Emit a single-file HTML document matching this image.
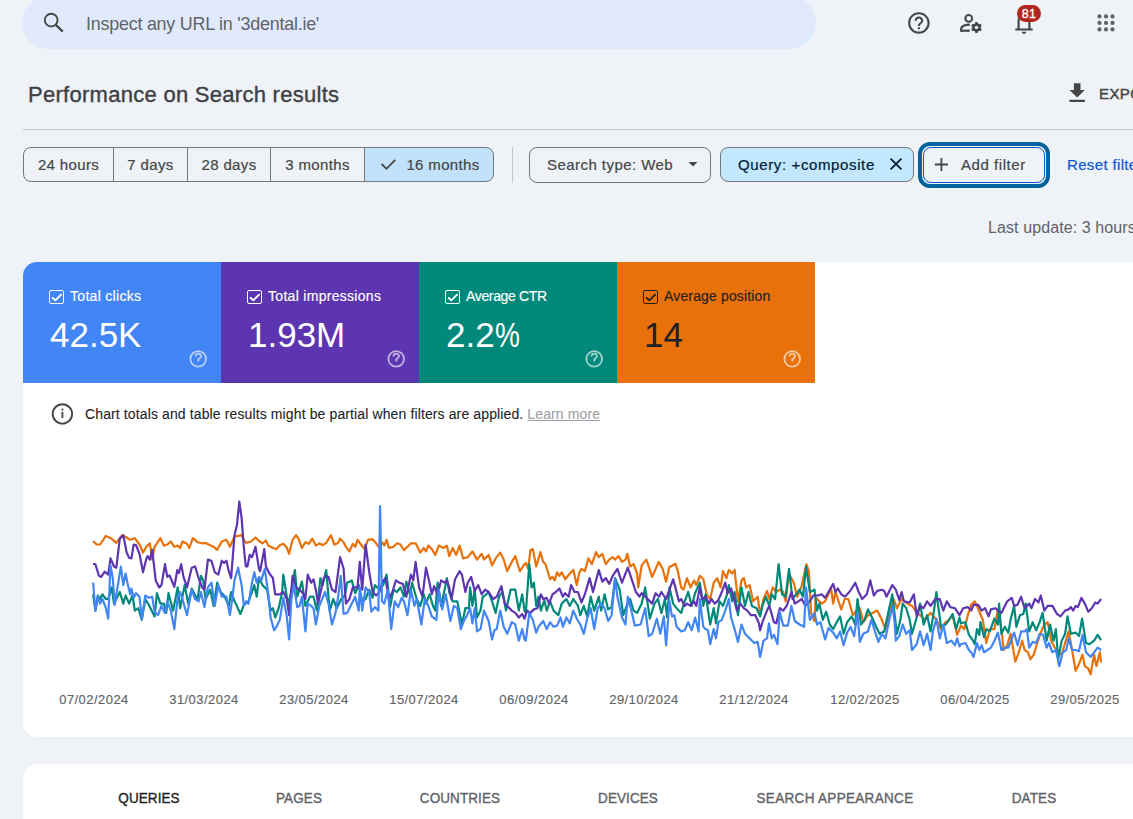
<!DOCTYPE html>
<html><head><meta charset="utf-8">
<style>
*{margin:0;padding:0;box-sizing:border-box}
html,body{width:1133px;height:819px;overflow:hidden;background:#eff2f7;font-family:"Liberation Sans",sans-serif;color:#1f1f1f;position:relative}
.abs{position:absolute;white-space:nowrap}
svg{position:absolute;overflow:visible}
#search{left:22px;top:-4px;width:794px;height:53px;border-radius:26.5px;background:#e1eafc}
#search-ph{left:86px;top:13.6px;font-size:17.9px;letter-spacing:-0.22px;color:#5f6368}
#title{left:28px;top:82px;font-size:22px;letter-spacing:0.28px;color:#3c4043;-webkit-text-stroke:0.35px currentColor}
#rule{left:23px;top:129px;width:1110px;height:1px;background:#c4c7c5}
.seg{position:absolute;top:147px;height:35px;border:1px solid #747775;font-size:15px;letter-spacing:0.35px;color:#444746;padding-top:8px;text-align:center;-webkit-text-stroke:0.2px currentColor}
#sep{left:512px;top:147px;width:1px;height:36px;background:#c4c7c5}
.chip{position:absolute;top:147px;height:35px;border:1px solid #747775;border-radius:8px;font-size:15px;color:#444746}
.ct{position:absolute;top:8px;font-size:15px;letter-spacing:0.45px;white-space:nowrap;-webkit-text-stroke:0.2px currentColor}
#lastupd{left:988px;top:219px;font-size:16px;color:#5f6368;letter-spacing:0.1px}
#export{left:1099px;top:85px;font-size:15px;color:#444746;letter-spacing:0.4px;-webkit-text-stroke:0.45px currentColor}
#reset{left:1067px;top:156px;font-size:15px;color:#0b57d0;letter-spacing:0.35px;-webkit-text-stroke:0.2px currentColor}
#panel1{left:23px;top:262px;width:1130px;height:475px;background:#fff;border-radius:14px}
.card{position:absolute;top:262px;width:198px;height:121px;color:#fff}
.card .lbl{position:absolute;left:47px;top:26px;font-size:14px;letter-spacing:0.3px;-webkit-text-stroke:0.15px currentColor}
.card .val{position:absolute;left:27px;top:53px;font-size:35px}
.card .cb{position:absolute;left:26px;top:28px;width:15px;height:14px;border:1.4px solid #fff;border-radius:2px}
.card svg{position:absolute}
#info-text{left:85px;top:406px;font-size:14px;color:#1f1f1f;letter-spacing:0.12px;-webkit-text-stroke:0.1px currentColor}
#learn{color:#9aa0a6;text-decoration:underline}
.xl{position:absolute;top:692px;font-size:13px;letter-spacing:0.45px;color:#5f6368;width:110px;text-align:center;-webkit-text-stroke:0.15px currentColor}
#panel2{left:23px;top:764px;width:1130px;height:100px;background:#fff;border-radius:14px}
.tab{position:absolute;top:789px;font-size:15px;color:#5f6368;width:200px;text-align:center;letter-spacing:0.1px;-webkit-text-stroke:0.4px currentColor;transform:scaleX(0.9)}
</style></head><body>
<div class="abs" id="search"></div>
<svg style="left:0;top:0" width="1" height="1">
 <circle cx="51.2" cy="20.1" r="6.4" fill="none" stroke="#444746" stroke-width="1.9"/>
 <line x1="55.6" y1="24.6" x2="62.8" y2="31.6" stroke="#444746" stroke-width="2.2"/>
</svg>
<div class="abs" id="search-ph">Inspect any URL in '3dental.ie'</div>

<!-- header icons -->
<svg style="left:906.1px;top:9.9px" width="25.8" height="25.8" viewBox="0 0 24 24"><path fill="#444746" d="M11 18h2v-2h-2v2zm1-16C6.48 2 2 6.48 2 12s4.48 10 10 10 10-4.48 10-10S17.52 2 12 2zm0 18c-4.41 0-8-3.590-8-8s3.59-8 8-8 8 3.59 8 8-3.59 8-8 8zm0-14c-2.21 0-4 1.790-4 4h2c0-1.1.9-2 2-2s2 .9 2 2c0 2-3 1.75-3 5h2c0-2.25 3-2.5 3-5 0-2.21-1.79-4-4-4z"/></svg>
<svg style="left:0;top:0" width="1" height="1">
 <circle cx="968.7" cy="18.4" r="3.4" fill="none" stroke="#444746" stroke-width="2"/>
 <path d="M961.1 31.8 V29.6 Q961.1 26.6 964.2 25.5 Q966.8 24.6 969.8 24.6" fill="none" stroke="#444746" stroke-width="2.1"/>
 <line x1="961" y1="30.7" x2="969.8" y2="30.7" stroke="#444746" stroke-width="2.2"/>
 <g transform="translate(976.5 27.5)">
  <circle r="4.3" fill="#444746"/>
  <g fill="#444746"><rect x="-1.35" y="-5.4" width="2.7" height="10.8"/><rect x="-1.35" y="-5.4" width="2.7" height="10.8" transform="rotate(60)"/><rect x="-1.35" y="-5.4" width="2.7" height="10.8" transform="rotate(120)"/></g>
  <circle r="1.7" fill="#eff2f7"/>
 </g>
</svg>
<svg style="left:1011px;top:9.7px" width="26" height="26" viewBox="0 -960 960 960"><path fill="#444746" d="M160-200v-80h80v-280q0-83 50-147.5T420-792v-28q0-25 17.5-42.5T480-880q25 0 42.5 17.5T540-820v28q80 20 130 84.5T720-560v280h80v80H160Zm320-300Zm0 420q-33 0-56.5-23.5T400-160h160q0 33-23.5 56.5T480-80ZM320-280h320v-280q0-66-47-113t-113-47q-66 0-113 47t-47 113v280Z"/></svg>
<div class="abs" style="left:1017px;top:5px;width:24px;height:17px;border-radius:9px;background:#b3261e;color:#fff;font-size:12.5px;-webkit-text-stroke:0.35px #fff;text-align:center;line-height:18px;letter-spacing:0.2px">81</div>
<svg style="left:0;top:0" width="1" height="1"><g fill="#5f6368">
 <circle cx="1099.5" cy="16.4" r="2.1"/><circle cx="1106" cy="16.4" r="2.1"/><circle cx="1112.5" cy="16.4" r="2.1"/>
 <circle cx="1099.5" cy="22.9" r="2.1"/><circle cx="1106" cy="22.9" r="2.1"/><circle cx="1112.5" cy="22.9" r="2.1"/>
 <circle cx="1099.5" cy="29.4" r="2.1"/><circle cx="1106" cy="29.4" r="2.1"/><circle cx="1112.5" cy="29.4" r="2.1"/>
</g></svg>

<div class="abs" id="title">Performance on Search results</div>
<svg style="left:1064.4px;top:79.5px" width="26.4" height="26.4" viewBox="0 0 24 24"><path fill="#444746" d="M19 9h-4V3H9v6H5l7 7 7-7zM5 18v2h14v-2H5z"/></svg>
<div class="abs" id="export">EXPORT</div>
<div class="abs" id="rule"></div>

<div class="seg" style="left:23px;width:91px;border-radius:8px 0 0 8px">24 hours</div>
<div class="seg" style="left:113px;width:75px">7 days</div>
<div class="seg" style="left:187px;width:84px">28 days</div>
<div class="seg" style="left:270px;width:95px">3 months</div>
<div class="seg" style="left:364px;width:130px;border-radius:0 8px 8px 0;background:#c1e2fa;color:#444746;padding-left:28px">16 months</div>
<svg style="left:0;top:0" width="1" height="1"><path d="M381.6 164.0 L386.4 168.8 L395.3 159.9" fill="none" stroke="#444746" stroke-width="1.8"/></svg>
<div class="abs" id="sep"></div>

<div class="chip" style="left:529px;width:182px;height:36px"><div class="ct" style="left:17px">Search type: Web</div></div>
<svg style="left:0;top:0" width="1" height="1"><path d="M688.5 162 L697.5 162 L693 166.6 Z" fill="#444746"/></svg>
<div class="chip" style="left:720px;width:194px;background:#c2e7ff;color:#001d35"><div class="ct" style="left:17px;letter-spacing:0.62px">Query: +composite</div></div>
<svg style="left:0;top:0" width="1" height="1"><path d="M890.6 158.6 L901.4 169.4 M901.4 158.6 L890.6 169.4" stroke="#001d35" stroke-width="1.8"/></svg>
<div class="abs" style="left:918px;top:142px;width:132px;height:46px;border:4px solid #00639b;border-radius:12px"></div>
<div class="abs" style="left:923px;top:147px;width:122px;height:36px;border:1px solid #0b57d0;border-radius:8px"></div>
<svg style="left:0;top:0" width="1" height="1"><path d="M941.4 158 V171 M934.9 164.5 H947.9" stroke="#444746" stroke-width="1.8"/></svg>
<div class="abs" style="left:961px;top:156px;font-size:15px;color:#444746;letter-spacing:0.55px;-webkit-text-stroke:0.2px currentColor">Add filter</div>
<div class="abs" id="reset">Reset filters</div>

<div class="abs" id="lastupd">Last update: 3 hours ago</div>

<div class="abs" id="panel1"></div>
<div class="card" style="left:23px;background:#4285f4;border-top-left-radius:14px"><div class="cb"></div>
 <svg style="left:0;top:0" width="1" height="1"><path d="M29.1 35.6 L32.4 38.3 L38.6 32.1" fill="none" stroke="#fff" stroke-width="1.9"/></svg>
 <div class="lbl">Total clicks</div><div class="val">42.5K</div>
 <svg style="left:0;top:0" width="1" height="1"><g opacity="0.62"><circle cx="175.2" cy="96.9" r="7.8" fill="none" stroke="#fff" stroke-width="1.8"/><path d="M172.5 94.5 Q172.5 91.6 175.2 91.6 Q177.9 91.6 177.9 94.2 Q177.9 95.9 175.3 97.3 V99.6" fill="none" stroke="#fff" stroke-width="1.9"/></g></svg>
</div>
<div class="card" style="left:221px;background:#5e35b1"><div class="cb"></div>
 <svg style="left:0;top:0" width="1" height="1"><path d="M29.1 35.6 L32.4 38.3 L38.6 32.1" fill="none" stroke="#fff" stroke-width="1.9"/></svg>
 <div class="lbl">Total impressions</div><div class="val">1.93M</div>
 <svg style="left:0;top:0" width="1" height="1"><g opacity="0.62"><circle cx="175.2" cy="96.9" r="7.8" fill="none" stroke="#fff" stroke-width="1.8"/><path d="M172.5 94.5 Q172.5 91.6 175.2 91.6 Q177.9 91.6 177.9 94.2 Q177.9 95.9 175.3 97.3 V99.6" fill="none" stroke="#fff" stroke-width="1.9"/></g></svg>
</div>
<div class="card" style="left:419px;background:#00897b"><div class="cb"></div>
 <svg style="left:0;top:0" width="1" height="1"><path d="M29.1 35.6 L32.4 38.3 L38.6 32.1" fill="none" stroke="#fff" stroke-width="1.9"/></svg>
 <div class="lbl" style="letter-spacing:-0.35px">Average CTR</div><div class="val">2.2<span style="display:inline-block;transform:scaleX(0.8);transform-origin:left">%</span></div>
 <svg style="left:0;top:0" width="1" height="1"><g opacity="0.62"><circle cx="175.2" cy="96.9" r="7.8" fill="none" stroke="#fff" stroke-width="1.8"/><path d="M172.5 94.5 Q172.5 91.6 175.2 91.6 Q177.9 91.6 177.9 94.2 Q177.9 95.9 175.3 97.3 V99.6" fill="none" stroke="#fff" stroke-width="1.9"/></g></svg>
</div>
<div class="card" style="left:617px;background:#e8710a;color:#202124"><div class="cb" style="border-color:#202124"></div>
 <svg style="left:0;top:0" width="1" height="1"><path d="M29.1 35.6 L32.4 38.3 L38.6 32.1" fill="none" stroke="#202124" stroke-width="1.9"/></svg>
 <div class="lbl" style="letter-spacing:0.15px">Average position</div><div class="val">14</div>
 <svg style="left:0;top:0" width="1" height="1"><g opacity="0.62"><circle cx="175.2" cy="96.9" r="7.8" fill="none" stroke="#fff" stroke-width="1.8"/><path d="M172.5 94.5 Q172.5 91.6 175.2 91.6 Q177.9 91.6 177.9 94.2 Q177.9 95.9 175.3 97.3 V99.6" fill="none" stroke="#fff" stroke-width="1.9"/></g></svg>
</div>

<svg style="left:0;top:0" width="1" height="1"><g><circle cx="62.4" cy="413.9" r="9.7" fill="none" stroke="#474747" stroke-width="1.9"/><rect x="61.45" y="412.0" width="1.9" height="6.0" fill="#474747"/><rect x="61.45" y="408.6" width="1.9" height="1.9" fill="#474747"/></g></svg>
<div class="abs" id="info-text">Chart totals and table results might be partial when filters are applied. <span id="learn">Learn more</span></div>

<!-- CHART -->
<svg id="chart" style="left:0;top:0" width="1133" height="819">
<polyline fill="none" stroke="#e8710a" stroke-width="2.2" stroke-linejoin="round" points="93.1,541.0 96.6,544.5 100.1,544.5 105.9,535.9 109.3,537.5 111.7,538.7 116.3,542.9 122.1,535.2 126.7,537.5 130.2,539.8 134.8,538.2 139.5,544.5 143.0,552.6 146.4,546.8 149.9,543.3 152.2,559.6 154.6,546.8 160.4,538.2 163.8,545.6 167.3,544.5 170.8,541.5 174.3,546.8 177.7,545.6 180.1,548.0 182.4,541.5 187.0,543.8 189.3,548.0 192.8,538.2 197.5,542.2 202.1,543.3 205.6,542.9 210.2,545.2 213.7,546.8 217.2,549.8 221.8,541.5 226.4,539.8 229.9,546.8 234.5,536.4 235.8,536.4 241.6,535.2 243.9,539.8 246.2,542.9 250.9,541.5 255.5,537.5 259.0,541.0 262.5,543.3 265.9,540.5 268.3,545.6 272.9,548.0 276.4,549.1 279.8,545.2 283.3,543.8 286.8,547.5 289.1,553.8 292.6,539.8 296.1,535.2 298.4,538.7 301.9,548.0 305.4,542.2 308.8,543.8 312.3,538.7 315.8,545.6 319.3,543.3 322.7,545.2 326.2,542.9 330.9,535.2 334.3,544.5 337.8,543.3 340.1,538.7 343.6,542.2 345.9,546.8 349.4,551.4 352.9,543.8 355.2,546.8 357.5,539.8 361.0,544.5 364.5,549.1 368.0,539.8 372.6,539.2 376.1,543.3 379.5,548.0 382.0,542.2 384.3,545.6 386.6,539.8 388.9,548.0 393.5,546.8 397.0,543.3 400.5,544.5 404.0,550.3 407.5,546.8 410.9,543.3 415.6,543.3 420.2,552.6 423.7,548.0 426.0,551.4 428.3,545.6 431.8,549.1 435.3,554.9 438.8,545.6 443.4,548.0 446.9,545.6 449.2,556.1 452.7,548.0 456.2,554.9 459.6,545.6 463.1,558.4 467.7,557.2 472.4,551.4 477.0,559.6 481.7,553.8 484.0,559.6 488.6,554.9 492.1,565.4 495.6,558.4 500.2,552.6 503.7,559.6 507.2,571.2 511.8,561.9 515.3,556.1 519.9,571.2 524.5,564.2 525.8,563.0 528.1,568.8 530.4,550.3 532.8,549.1 536.2,566.5 540.4,552.1 543.2,561.9 545.5,564.2 550.1,579.3 552.5,576.9 554.8,580.4 557.1,572.3 559.4,575.8 561.7,572.3 565.2,579.3 569.8,573.5 573.3,570.0 576.8,585.1 579.1,573.5 581.4,568.8 584.9,571.2 588.4,558.4 591.9,564.2 596.0,552.1 598.8,557.2 602.3,553.8 605.8,564.2 609.3,559.6 612.7,557.2 615.1,559.6 618.5,556.1 622.0,561.9 625.5,559.6 627.3,553.8 630.1,566.5 633.6,564.2 637.1,573.5 638.2,587.4 641.7,565.4 646.4,559.6 652.2,576.9 658.7,561.9 662.6,568.8 666.1,581.6 669.5,566.5 670.8,566.5 675.4,563.7 677.8,571.2 681.2,587.4 683.5,589.7 687.0,578.1 690.5,587.4 694.0,580.4 696.3,585.1 699.8,575.8 703.3,579.3 706.7,594.3 710.2,599.0 713.7,582.7 717.2,578.1 720.6,587.4 723.0,571.2 726.4,578.1 728.8,570.0 732.2,573.5 734.6,570.0 738.0,601.3 741.5,580.4 743.8,578.1 746.2,587.4 749.6,585.1 753.1,601.3 757.7,596.7 760.1,615.2 763.5,599.0 767.0,590.9 769.3,599.0 772.8,587.4 776.3,592.0 779.8,589.7 783.2,592.0 785.6,601.3 789.0,573.5 793.7,582.7 797.2,596.7 799.5,592.0 801.8,585.1 806.4,564.2 808.8,571.2 811.1,612.9 814.5,621.0 815.8,597.8 821.6,603.6 825.1,601.3 828.5,594.3 830.9,587.4 833.2,603.6 835.5,592.0 837.8,599.0 841.3,609.4 844.8,599.0 848.3,599.0 852.9,615.2 856.4,610.6 859.8,608.2 863.3,622.2 868.0,615.2 872.6,612.9 877.2,610.6 881.9,619.8 885.4,629.1 888.8,615.2 893.5,599.0 896.9,608.2 901.6,599.0 907.4,603.6 912.0,605.9 915.5,610.6 920.1,615.2 924.8,619.8 930.6,612.9 936.4,619.8 941.0,629.1 945.6,622.2 949.1,619.8 952.6,615.2 957.2,634.9 959.5,629.1 960.8,625.6 964.3,629.1 967.8,615.2 971.2,604.8 974.7,601.3 977.0,605.9 979.3,611.7 982.8,619.8 986.3,643.0 989.8,629.1 994.4,629.1 997.9,609.4 1001.4,629.1 1003.7,650.0 1007.2,645.3 1010.6,633.8 1015.3,661.6 1018.8,652.3 1022.2,640.7 1024.6,650.0 1028.0,652.3 1030.4,659.3 1033.8,654.6 1037.3,643.0 1040.8,632.6 1044.3,624.5 1047.7,622.2 1051.2,640.7 1054.7,647.7 1058.2,652.3 1061.7,654.6 1065.1,643.0 1068.6,631.4 1072.1,650.0 1075.6,670.8 1079.0,663.9 1082.5,654.6 1084.8,666.2 1088.3,668.5 1090.6,674.3 1094.1,654.6 1096.4,666.2 1099.9,652.3 1101.1,662.7"/>
<polyline fill="none" stroke="#00897b" stroke-width="2.2" stroke-linejoin="round" points="93.1,594.3 95.4,610.6 97.8,595.5 100.1,599.0 102.4,594.3 105.9,599.0 108.2,599.0 111.7,587.4 114.0,603.6 116.3,599.0 119.8,592.0 123.3,603.6 125.6,595.5 129.1,603.6 132.5,595.5 134.8,610.6 138.3,608.2 141.8,619.8 145.3,599.0 148.8,604.8 154.6,616.4 156.9,593.2 160.4,603.6 163.8,603.6 166.2,612.9 168.5,593.2 173.1,610.6 177.7,587.4 180.1,608.2 184.7,585.1 188.2,603.6 191.7,588.5 197.5,600.1 200.9,575.8 203.2,580.4 205.6,599.0 210.2,589.7 213.7,605.9 217.2,582.7 220.6,592.0 224.1,595.5 228.8,605.9 231.1,592.0 234.5,601.3 235.8,603.6 240.4,614.0 243.9,604.8 248.5,601.3 252.0,592.0 254.3,585.1 256.7,596.7 259.0,578.1 262.5,585.1 267.1,589.7 270.6,610.6 272.9,608.2 275.2,617.5 278.7,608.2 282.2,592.0 283.3,574.6 286.8,596.7 289.1,603.6 292.6,582.7 294.9,570.0 297.2,596.7 301.9,581.6 305.4,605.9 310.0,596.7 313.5,596.7 316.9,610.6 320.4,578.1 322.7,585.1 326.2,570.0 329.7,610.6 333.2,599.0 336.7,608.2 341.3,599.0 344.8,595.5 347.1,582.7 351.7,580.4 355.2,593.2 358.7,585.1 362.2,601.3 365.6,599.0 369.1,589.7 372.6,597.8 374.9,585.1 379.5,589.7 383.1,585.1 386.6,574.6 390.1,607.1 393.5,589.7 397.0,592.0 400.5,587.4 404.0,596.7 406.3,581.6 409.8,594.3 412.1,582.7 416.7,599.0 420.2,605.9 423.7,594.3 426.0,603.6 429.5,594.3 433.0,605.9 435.3,610.6 437.6,582.7 441.1,605.9 444.6,589.7 446.9,578.1 449.2,592.0 452.7,601.3 457.3,601.3 461.9,624.5 465.4,608.2 468.9,608.2 470.1,587.4 472.4,605.9 474.7,589.7 477.0,617.5 480.5,610.6 482.8,596.7 485.1,595.5 488.6,592.0 492.1,601.3 495.6,612.9 499.0,596.7 502.5,592.0 506.0,610.6 510.6,589.7 515.3,589.7 518.8,610.6 522.2,594.3 524.5,610.6 525.8,612.9 529.3,564.2 531.6,587.4 533.9,582.7 536.2,605.9 538.5,596.7 540.9,610.6 544.3,600.1 546.7,610.6 550.1,601.3 553.6,610.6 558.3,615.2 561.7,603.6 566.4,599.0 569.8,605.9 573.3,599.0 578.0,605.9 580.3,615.2 583.8,605.9 587.2,616.4 590.7,596.7 594.2,610.6 598.8,596.7 601.2,610.6 604.6,594.3 608.1,609.4 611.6,607.1 615.1,578.1 619.7,589.7 623.2,615.2 626.7,605.9 630.1,599.0 633.6,610.6 637.1,612.9 641.7,603.6 645.2,587.4 649.8,618.7 654.5,603.6 658.0,599.0 661.4,612.9 664.9,599.0 667.2,617.5 669.5,587.4 673.1,603.6 676.6,608.2 681.2,612.9 684.7,601.3 688.2,592.0 691.7,605.9 695.1,593.2 699.8,582.7 703.3,605.9 705.6,594.3 710.2,624.5 713.7,608.2 716.0,623.3 719.5,601.3 723.0,605.9 726.4,596.7 728.8,585.1 732.2,601.3 734.6,592.0 738.0,615.2 741.5,587.4 745.0,605.9 748.5,592.0 751.9,605.9 756.6,608.2 760.1,616.4 762.4,605.9 765.9,596.7 769.3,605.9 771.7,594.3 775.1,599.0 778.6,564.2 782.1,594.3 785.6,596.7 789.0,568.8 792.5,599.0 796.0,594.3 799.5,589.7 803.0,596.7 806.0,566.5 809.9,592.0 814.5,589.7 817.0,610.6 819.3,603.6 822.8,619.8 826.2,611.7 829.7,624.5 833.2,629.1 836.7,622.2 840.1,616.4 843.6,633.8 847.1,622.2 851.7,616.4 855.2,624.5 857.5,599.0 861.0,624.5 864.5,619.8 868.0,609.4 872.6,618.7 876.1,626.8 879.6,633.8 884.2,631.4 887.7,615.2 892.3,594.3 896.9,633.8 900.4,619.8 902.7,603.6 906.2,608.2 909.7,619.8 912.0,633.8 916.7,617.5 920.1,603.6 923.6,624.5 927.1,615.2 930.6,631.4 934.0,610.6 936.4,592.0 941.0,626.8 945.6,624.5 949.1,619.8 952.6,614.0 956.1,629.1 959.5,617.5 960.8,623.3 965.4,622.2 968.9,634.9 972.4,639.5 974.7,644.2 977.0,629.1 979.3,634.9 980.5,622.2 984.0,637.2 986.3,629.1 989.8,631.4 994.4,618.7 997.9,624.5 999.1,603.6 1001.4,633.8 1004.8,626.8 1008.3,632.6 1010.6,619.8 1014.1,605.9 1016.4,626.8 1019.9,615.2 1023.4,614.0 1025.7,603.6 1029.2,631.4 1032.7,622.2 1036.2,630.3 1039.6,622.2 1042.6,612.9 1046.6,640.7 1050.1,624.5 1053.5,640.7 1055.9,629.1 1058.2,659.3 1061.7,640.7 1065.1,633.8 1067.5,616.4 1070.9,633.8 1075.6,632.6 1079.0,636.1 1082.1,618.7 1086.0,643.0 1089.5,644.2 1094.1,640.7 1097.6,634.9 1101.1,640.2"/>
<polyline fill="none" stroke="#5e35b1" stroke-width="2.2" stroke-linejoin="round" points="93.1,564.2 95.4,564.2 98.9,575.8 101.2,576.9 104.7,571.6 108.2,574.6 110.5,558.4 114.0,566.5 116.3,567.7 119.8,538.7 123.3,535.2 126.7,552.6 129.1,557.7 131.4,558.4 133.7,544.5 136.0,545.0 139.5,553.8 143.0,572.3 146.4,558.4 147.6,556.1 149.9,559.6 152.2,549.8 155.7,580.4 159.2,587.4 161.5,585.1 165.0,564.2 167.3,576.9 169.6,575.3 174.3,586.9 177.3,570.0 178.9,573.0 181.2,564.2 183.5,576.9 187.0,587.4 191.7,567.7 195.1,566.5 198.6,578.1 202.1,587.4 204.4,589.7 207.9,559.6 211.4,560.7 214.8,572.3 218.3,574.6 221.8,560.7 224.1,563.0 226.4,560.7 228.8,571.2 231.1,578.1 234.5,535.2 237.0,524.8 239.3,501.6 241.6,517.8 243.9,548.0 245.8,566.5 247.4,566.5 249.7,554.9 252.0,557.2 255.5,546.8 259.0,568.8 260.1,571.2 264.3,549.1 265.9,566.5 269.4,573.5 272.9,578.1 275.2,594.3 279.8,594.3 283.3,592.0 286.8,599.0 289.1,615.2 292.6,575.8 296.1,587.4 299.6,589.7 303.0,593.2 305.4,599.0 307.7,574.6 311.2,582.7 313.5,579.3 315.8,589.7 318.1,603.6 321.6,587.4 323.9,578.1 326.2,575.8 328.5,576.9 332.0,589.7 335.5,592.0 340.1,557.2 343.6,568.8 345.9,603.6 349.4,599.0 352.9,587.4 357.5,587.4 359.8,561.9 362.2,589.7 365.6,544.5 369.1,571.2 372.6,592.0 376.1,595.5 379.5,592.0 382.0,582.7 385.4,578.1 388.9,599.0 392.4,592.0 395.9,580.4 399.3,582.7 402.8,583.9 406.3,596.7 410.9,574.6 413.3,580.4 415.6,561.9 419.1,587.4 422.5,596.7 426.0,567.7 429.5,582.7 431.8,594.3 434.1,586.2 437.6,594.3 441.1,580.4 444.6,582.7 446.9,580.4 449.2,587.4 451.5,599.0 455.0,579.3 459.6,571.2 461.9,574.6 465.4,592.0 467.7,582.7 471.2,576.9 474.7,590.9 478.2,585.1 481.7,594.3 485.1,589.7 488.6,592.0 493.2,599.0 496.7,596.7 501.4,586.2 504.8,603.6 508.3,607.1 511.8,610.6 515.3,612.9 518.8,617.5 522.2,614.0 524.5,618.7 527.0,610.6 530.4,612.9 533.9,609.4 537.4,608.2 540.9,594.3 543.2,599.0 546.7,597.8 549.0,603.6 552.5,594.3 555.9,592.0 559.4,588.5 562.9,596.7 565.2,593.2 568.7,596.7 571.0,585.1 574.5,592.0 578.0,592.0 581.4,602.5 584.9,594.3 589.6,578.1 593.0,592.0 598.8,570.0 602.3,581.6 605.8,578.1 609.3,583.9 612.7,575.8 617.4,568.8 619.7,575.8 622.0,582.7 627.8,567.7 631.3,578.1 635.9,592.0 639.4,596.7 641.7,593.2 646.4,597.8 648.7,600.1 652.2,603.6 655.6,593.2 659.1,596.7 661.4,592.0 666.1,599.0 669.5,589.7 673.1,579.3 675.4,587.4 678.9,601.3 681.2,599.0 684.7,605.9 687.0,603.6 690.5,605.9 694.0,601.3 696.3,605.9 699.8,587.4 702.1,599.0 705.6,596.7 709.1,603.6 711.4,599.0 714.8,603.6 718.3,600.1 721.8,592.0 725.3,582.7 727.6,593.2 731.1,588.5 733.4,596.7 736.9,610.6 740.4,603.6 743.8,608.2 747.3,610.6 750.8,615.2 755.4,615.2 758.9,623.3 760.1,630.3 762.4,622.2 767.0,610.6 769.3,605.9 774.0,622.2 776.3,623.3 779.8,608.2 783.2,610.6 786.7,605.9 791.4,592.0 794.8,603.6 798.3,601.3 801.8,599.0 805.3,605.9 809.9,601.3 813.4,595.5 818.1,595.5 821.6,594.3 825.1,597.8 828.5,592.0 833.2,583.9 835.5,592.0 837.8,588.5 841.3,594.3 844.8,596.7 849.4,592.0 851.7,588.5 855.2,582.7 858.7,592.0 862.2,599.0 866.8,594.3 870.3,580.4 873.8,595.5 877.2,590.9 881.9,589.7 884.2,590.9 886.5,596.7 892.3,585.1 895.8,589.7 899.3,600.1 901.6,592.0 903.9,601.3 909.7,602.5 913.9,594.3 916.7,616.4 920.1,605.9 923.6,608.2 927.1,601.3 930.6,605.9 935.2,599.0 939.8,599.0 943.3,610.6 946.8,601.3 950.3,607.1 954.9,608.2 959.5,615.2 963.1,608.2 967.8,607.1 971.2,610.6 973.5,604.8 978.2,604.8 981.7,610.6 985.1,608.2 988.6,616.4 990.9,609.4 995.6,608.2 997.9,610.6 1001.4,612.9 1007.2,601.3 1011.8,597.8 1014.1,605.9 1017.6,604.8 1021.1,596.7 1024.6,608.2 1029.2,603.6 1031.5,608.2 1035.0,599.0 1038.5,602.5 1040.8,595.5 1044.3,610.6 1047.7,605.9 1052.4,605.9 1057.0,614.0 1060.5,616.4 1065.1,610.6 1068.6,609.4 1070.9,607.1 1073.2,610.6 1075.6,605.9 1077.9,607.1 1081.4,597.8 1084.8,603.6 1088.3,611.7 1091.8,608.2 1095.3,602.5 1097.6,603.6 1101.1,599.0"/>
<polyline fill="none" stroke="#4285f4" stroke-width="2.2" stroke-linejoin="round" points="93.1,582.7 95.4,610.6 97.8,596.7 100.1,603.6 102.4,599.0 105.9,608.2 108.2,618.7 110.5,565.4 112.8,578.1 114.7,604.8 117.5,587.4 120.9,566.5 123.3,585.1 125.6,573.5 127.9,585.1 130.2,594.3 131.4,588.5 133.7,597.8 136.0,593.2 139.5,596.7 141.8,618.7 145.3,595.5 148.8,597.8 152.2,596.7 154.6,611.7 158.0,615.2 161.5,605.9 165.0,612.9 167.3,601.3 170.8,610.6 174.3,629.1 177.7,596.7 180.1,592.0 182.4,599.0 187.0,615.2 191.7,589.7 195.1,599.0 198.6,601.3 200.9,592.0 204.4,607.1 207.9,587.4 211.4,582.7 214.8,605.9 218.3,585.1 221.8,596.7 226.4,596.7 229.9,615.2 232.2,599.0 234.5,580.4 238.1,567.7 241.6,585.1 243.9,605.9 246.2,601.3 248.5,603.6 252.0,582.7 254.3,572.3 256.7,582.7 259.0,576.9 261.3,580.4 264.8,568.8 268.3,594.3 270.6,617.5 274.1,630.3 276.4,626.8 279.8,619.8 283.3,597.8 286.8,616.4 289.1,639.5 291.4,599.0 293.8,585.1 297.2,607.1 299.6,605.9 301.9,596.7 305.4,631.4 307.7,603.6 311.2,605.9 313.5,608.2 315.8,624.5 319.3,605.9 322.7,597.8 325.1,592.0 328.5,603.6 332.0,624.5 335.5,612.9 337.8,599.0 340.8,575.8 343.6,614.0 347.1,612.9 350.6,605.9 355.2,596.7 358.7,610.6 359.8,587.4 362.2,610.6 365.6,587.4 369.1,592.0 371.4,611.7 374.9,607.1 378.4,610.6 380.1,506.2 382.0,601.3 384.3,603.6 387.8,589.7 391.2,629.1 394.7,601.3 398.2,607.1 401.7,597.8 404.0,601.3 407.5,615.2 410.9,589.7 414.4,605.9 416.7,599.0 421.4,624.5 424.8,599.0 428.3,605.9 431.8,616.4 436.4,619.8 438.8,589.7 442.2,609.4 445.7,594.3 450.4,621.0 453.8,605.9 457.3,608.2 460.8,629.1 464.3,619.8 466.6,616.4 470.1,608.2 472.4,623.3 474.7,608.2 477.0,631.4 480.5,629.1 484.0,610.6 488.6,621.0 492.1,639.5 494.4,630.3 496.7,629.1 500.2,610.6 503.7,626.8 507.2,633.8 511.8,622.2 515.3,624.5 518.8,640.7 522.2,629.1 524.5,639.5 525.8,640.7 529.3,612.9 532.8,619.8 536.2,632.6 538.5,626.8 543.2,621.0 546.7,629.1 550.1,622.2 553.6,626.8 557.1,625.6 560.6,617.5 562.9,626.8 566.4,617.5 569.8,623.3 573.3,610.6 576.8,618.7 580.3,624.5 583.8,633.8 587.2,618.7 590.7,608.2 594.2,629.1 597.7,608.2 601.2,603.6 604.6,608.2 608.1,621.0 611.6,615.2 615.1,578.1 617.4,596.7 622.0,617.5 625.5,624.5 627.8,596.7 631.3,610.6 634.8,625.6 640.6,624.5 645.2,608.2 648.7,636.1 652.2,633.8 656.8,618.7 660.3,633.8 663.8,616.4 666.1,645.3 669.5,601.3 672.0,616.4 674.3,615.2 676.6,626.8 681.2,631.4 684.7,630.3 688.2,622.2 691.7,630.3 695.1,617.5 698.6,631.4 699.8,599.0 703.3,626.8 705.6,629.1 707.9,630.3 710.2,644.2 713.7,629.1 716.0,638.4 718.3,622.2 721.8,619.8 725.3,610.6 728.8,599.0 731.1,617.5 734.6,629.1 738.0,641.9 741.5,624.5 745.0,633.8 749.6,638.4 754.3,643.0 757.7,641.9 760.1,656.9 763.5,640.7 767.0,638.4 768.9,623.3 771.7,638.4 774.0,634.9 777.5,644.2 779.8,611.7 783.2,625.6 787.9,625.6 791.4,605.9 794.8,621.0 799.5,624.5 804.1,626.8 806.0,587.4 809.9,619.8 814.5,612.9 817.0,624.5 820.4,622.2 825.1,639.5 828.5,628.0 833.2,632.6 836.7,638.4 840.1,631.4 843.6,645.3 847.1,632.6 850.6,626.8 854.1,636.1 857.5,612.9 859.8,641.9 863.3,633.8 868.0,631.4 871.4,619.8 874.9,631.4 878.4,641.9 881.9,633.8 885.4,638.4 888.8,622.2 892.3,605.9 894.6,622.2 895.8,640.7 899.3,636.1 902.7,624.5 906.2,633.8 909.7,630.3 912.0,650.0 916.7,644.2 920.1,631.4 923.6,645.3 927.1,633.8 930.6,650.0 932.9,631.4 936.4,618.7 939.8,638.4 943.3,624.5 946.8,643.0 951.4,640.7 954.9,645.3 957.2,638.4 959.5,646.5 960.8,644.2 965.4,643.0 968.9,650.0 971.2,652.3 973.5,656.9 977.0,643.0 979.3,650.0 981.7,645.3 984.0,652.3 987.5,650.0 990.9,647.7 994.4,640.7 997.9,632.6 1001.4,650.0 1004.8,647.7 1008.3,647.7 1011.8,638.4 1014.1,632.6 1017.6,645.3 1021.1,631.4 1024.6,631.4 1026.9,629.1 1029.2,647.7 1032.7,641.9 1036.2,643.0 1039.6,633.8 1043.1,634.9 1046.6,647.7 1048.9,643.0 1052.4,652.3 1055.9,650.0 1059.3,666.2 1062.8,652.3 1066.3,650.0 1068.6,638.4 1072.1,650.0 1075.6,650.0 1079.0,651.1 1082.5,634.9 1086.0,652.3 1090.6,656.9 1094.1,652.3 1097.6,647.7 1101.1,650.0"/>
</svg>

<div class="xl" style="left:39px">07/02/2024</div>
<div class="xl" style="left:149px">31/03/2024</div>
<div class="xl" style="left:259px">23/05/2024</div>
<div class="xl" style="left:369px">15/07/2024</div>
<div class="xl" style="left:479px">06/09/2024</div>
<div class="xl" style="left:589px">29/10/2024</div>
<div class="xl" style="left:699px">21/12/2024</div>
<div class="xl" style="left:810px">12/02/2025</div>
<div class="xl" style="left:920px">06/04/2025</div>
<div class="xl" style="left:1030px">29/05/2025</div>

<div class="abs" id="panel2"></div>
<div class="tab" style="left:49px;color:#1f1f1f">QUERIES</div>
<div class="tab" style="left:199px">PAGES</div>
<div class="tab" style="left:360px">COUNTRIES</div>
<div class="tab" style="left:528px">DEVICES</div>
<div class="tab" style="left:735px;letter-spacing:0.35px">SEARCH APPEARANCE</div>
<div class="tab" style="left:934px">DATES</div>
</body></html>
